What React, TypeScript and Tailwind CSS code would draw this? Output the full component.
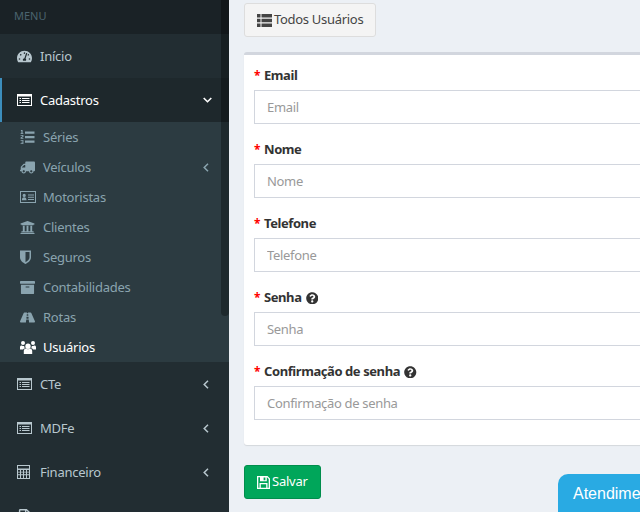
import React from "react";
import {
  FaTachometerAlt, FaTruck, FaUniversity, FaArchive, FaRoad, FaQuestionCircle, FaRegFileAlt,
} from "react-icons/fa";

function ListAlt() {
  return (
    <svg width="15" height="12" viewBox="0 0 15 12" fill="none">
      <path fillRule="evenodd" fill="currentColor" d="M0 0h15v12H0zM1 2.500V11h13V2.500z" />
      <path fill="currentColor" d="M2.500 4h1.500v1H2.500zM5 4h7.500v1H5zM2.500 6h1.500v1H2.500zM5 6h7.500v1H5zM2.500 8h1.500v1H2.500zM5 8h7.500v1H5z" />
    </svg>
  );
}

function ListOl() {
  return (
    <svg width="15" height="14" viewBox="0 0 15 14">
      <path fill="currentColor" d="M5 1.500h9.500v2.200H5zM5 6h9.500v2.200H5zM5 10.500h9.500v2.200H5z" />
      <path fill="currentColor" d="M1 0h1.600v3.200h.8V4H.6v-.8h.8V1H.8zM.6 5h2.800v2L1.600 8h1.800v.8H.6V7.600L2.400 6.500V5.800H.6zM.6 10h2.800v4H.6v-.8h2v-.8H1.400v-.7h1.200v-.9h-2z" />
    </svg>
  );
}

function Card() {
  return (
    <svg width="16" height="12" viewBox="0 0 16 12">
      <path fillRule="evenodd" fill="currentColor" d="M0 0h16v12H0zM1 1v10h14V1z" />
      <path fill="currentColor" d="M4.200 2.800a1.600 1.600 0 1 1 0 3.200 1.600 1.600 0 0 1 0-3.200zM1.900 9.200c0-2 .8-3 2.300-3s2.300 1 2.300 3zM8 3.500h6v1H8zM8 5.700h6v1H8zM8 7.900h6v1H8z" />
    </svg>
  );
}

function Shield() {
  return (
    <svg width="11" height="14" viewBox="0 0 11 14">
      <path fillRule="evenodd" fill="currentColor" d="M0 .5h11v7c0 3-3 5.200-5.500 6.500C3 12.700 0 10.500 0 7.500zM5.500 2v10.200c1.800-1 4-2.700 4-4.700V2z" />
    </svg>
  );
}

function Calculator() {
  return (
    <svg width="13" height="14" viewBox="0 0 13 14">
      <path fillRule="evenodd" fill="currentColor" d="M0 0h13v14H0zM1 1v2.500h11V1zM1 5v1.700h2V5zM4 5v1.700h2V5zM7 5v1.700h2V5zM10 5v1.700h2V5zM1 7.600v1.700h2V7.600zM4 7.600v1.700h2V7.600zM7 7.600v1.700h2V7.600zM10 7.600v1.700h2V7.600zM1 10.300V13h2v-2.700zM4 10.300V13h2v-2.700zM7 10.300V13h2v-2.700zM10 10.300V13h2v-2.700z" />
    </svg>
  );
}

function ThList() {
  return (
    <svg width="15" height="13" viewBox="0 0 15 13">
      <path fill="currentColor" d="M0 0h3.500v3.500H0zM4.500 0H15v3.500H4.500zM0 4.750h3.500v3.500H0zM4.500 4.750H15v3.500H4.500zM0 9.500h3.500V13H0zM4.500 9.500H15V13H4.500z" />
    </svg>
  );
}

function Floppy() {
  return (
    <svg width="13" height="13" viewBox="0 0 13 13">
      <path fillRule="evenodd" fill="currentColor" d="M0 0h10.500L13 2.500V13H0zM1.300 1.300v10.400h1.200V7h8v4.700h1.200V3.100l-1.700-1.800H9.800v3.900H3V1.300zM3.800 8.300v3.400h5.400V8.300zM6.600 1.600h1.800v2.700H6.600z" />
    </svg>
  );
}

function Users() {
  return (
    <svg width="16" height="13" viewBox="0 0 16 13">
      <path fill="currentColor" d="M8 2.500a2.700 2.700 0 1 1 0 5.400 2.700 2.700 0 0 1 0-5.400zM3.800 13V10c0-1.500 1-2.600 2.200-2.600.5.400 1.200.8 2 .8s1.500-.4 2-.8c1.200 0 2.200 1.100 2.200 2.600v3zM3 0a2 2 0 1 1 0 4 2 2 0 0 1 0-4zM13 0a2 2 0 1 1 0 4 2 2 0 0 1 0-4zM0 8V6c0-1 .7-1.600 1.500-1.600.4.300 1 .5 1.500.5h1.300c-.2.900.2 1.800.8 2.400C4 7.400 3.300 7.800 3 8.500H0zM16 8V6c0-1-.7-1.600-1.500-1.600-.4.300-1 .5-1.500.5h-1.300c.2.900-.2 1.800-.8 2.400 1.100 0 1.800.4 2.100 1.200H16z" />
    </svg>
  );
}

function ChevLeft() {
  return (
    <svg width="6" height="9" viewBox="0 0 6 9" fill="none">
      <path d="M5 .7 1.200 4.500 5 8.300" stroke="currentColor" strokeWidth="1.500" />
    </svg>
  );
}

function ChevDown() {
  return (
    <svg width="9" height="6" viewBox="0 0 9 6" fill="none">
      <path d="M.7 1 4.500 4.700 8.300 1" stroke="currentColor" strokeWidth="1.600" />
    </svg>
  );
}

function Top({ icon, label, chevron, active }: { icon: React.ReactNode; label: string; chevron?: boolean; active?: boolean }) {
  return (
    <div className={active
      ? "h-[44px] flex items-center bg-[#1e282c] border-l-2 border-[#3c8dbc] pl-[15px] text-white"
      : "h-[44px] flex items-center pl-[17px] text-[#b8c7ce]"}>
      <span className="w-[23px] text-[15px] flex items-center">{icon}</span>
      <span className="flex-1 tracking-[-0.25px] pt-[1px]">{label}</span>
      {chevron && (active
        ? <span className="mr-[17px]"><ChevDown /></span>
        : <span className="mr-[20px]"><ChevLeft /></span>)}
    </div>
  );
}

function Sub({ icon, label, chevron, active }: { icon: React.ReactNode; label: string; chevron?: boolean; active?: boolean }) {
  return (
    <div className={active ? "h-[30px] flex items-center pl-[20px] text-white" : "h-[30px] flex items-center pl-[20px] text-[#8aa4af]"}>
      <span className="w-[23px] text-[15px] flex items-center">{icon}</span>
      <span className="flex-1 tracking-[-0.25px] pt-[1px]">{label}</span>
      {chevron && <span className="mr-[20px]"><ChevLeft /></span>}
    </div>
  );
}

function Field({ label, help }: { label: string; help?: boolean }) {
  return (
    <div className="mb-[15px]">
      <div className="h-[20px] mb-[5px] pt-[2px] flex items-center text-[13px] font-bold text-[#333] tracking-[-0.42px]">
        <span className="text-[#ff0000] text-[12px] w-[10px]">*</span>
        <span>{label}</span>
        {help && <FaQuestionCircle className="text-[12.5px] text-[#333] ml-[4px]" />}
      </div>
      <input
        readOnly
        placeholder={label}
        className="block w-full h-[34px] border border-[#d2d6de] bg-white px-[12px] text-[13px] text-[#555] placeholder:text-[#999] outline-none tracking-[-0.33px]"
      />
    </div>
  );
}

export default function App() {
  return (
    <div className="w-[640px] h-[512px] overflow-hidden flex bg-[#ecf0f5] text-[13px] font-['Noto_Sans',sans-serif] relative">
      <aside className="w-[229px] h-full shrink-0 bg-[#222d32] relative overflow-hidden">
        <div className="h-[34px] bg-[#1a2226] pl-[14px] flex items-center text-[11px] text-[#4b646f] pb-[2px]">MENU</div>
        <Top icon={<FaTachometerAlt />} label="Início" />
        <Top active chevron icon={<ListAlt />} label="Cadastros" />
        <div className="bg-[#2c3b41]">
          <Sub icon={<ListOl />} label="Séries" />
          <Sub chevron icon={<FaTruck className="-scale-x-100" />} label="Veículos" />
          <Sub icon={<Card />} label="Motoristas" />
          <Sub icon={<FaUniversity />} label="Clientes" />
          <Sub icon={<Shield />} label="Seguros" />
          <Sub icon={<FaArchive />} label="Contabilidades" />
          <Sub icon={<FaRoad />} label="Rotas" />
          <Sub active icon={<Users />} label="Usuários" />
        </div>
        <Top chevron icon={<ListAlt />} label="CTe" />
        <Top chevron icon={<ListAlt />} label="MDFe" />
        <Top chevron icon={<Calculator />} label="Financeiro" />
        <Top icon={<FaRegFileAlt />} label="NFSe" />
        <div className="absolute top-0 right-0 w-[8px] h-[316px] bg-black/30 rounded-b-[4px]" />
      </aside>
      <main className="flex-1 min-w-0 pl-[15px] pt-[3px]">
        <div className="w-[132px] h-[34px] flex items-center pl-[12px] gap-[2px] bg-[#f4f4f4] border border-[#ddd] rounded-[3px] text-[#444] tracking-[-0.3px]">
          <ThList />
          <span>Todos Usuários</span>
        </div>
        <div className="mt-[15px] w-[440px] h-[393px] bg-white border-t-[3px] border-[#d2d6de] rounded-[3px] shadow-[0_1px_1px_rgba(0,0,0,0.1)] pl-[10px] pr-[10px] pt-[10px]">
          <Field label="Email" />
          <Field label="Nome" />
          <Field label="Telefone" />
          <Field label="Senha" help />
          <Field label="Confirmação de senha" help />
        </div>
        <div className="mt-[20px] w-[77px] h-[34px] flex items-center pl-[12px] gap-[2px] bg-[#00a65a] border border-[#008d4c] rounded-[3px] text-white tracking-[-0.25px]">
          <Floppy />
          <span>Salvar</span>
        </div>
      </main>
      <div className="absolute left-[558px] top-[474px] w-[120px] h-[60px] rounded-tl-[10px] bg-[#29aae3] text-white text-[16px] font-['Liberation_Sans',sans-serif] pl-[15px] pt-[10px] leading-[20px] whitespace-nowrap">Atendimento</div>
    </div>
  );
}
